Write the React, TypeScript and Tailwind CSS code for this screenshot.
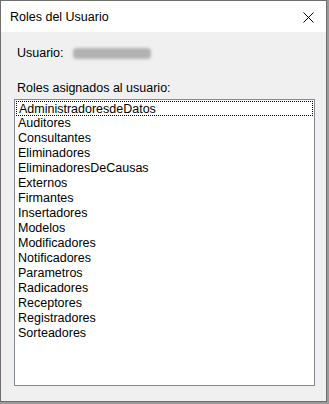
const roles = [
  "AdministradoresdeDatos",
  "Auditores",
  "Consultantes",
  "Eliminadores",
  "EliminadoresDeCausas",
  "Externos",
  "Firmantes",
  "Insertadores",
  "Modelos",
  "Modificadores",
  "Notificadores",
  "Parametros",
  "Radicadores",
  "Receptores",
  "Registradores",
  "Sorteadores",
];

export default function App() {
  return (
    <div
      className="w-[329px] h-[404px] bg-[#9a9a9a] text-[12.5px] text-black"
      style={{ fontFamily: '"Liberation Sans", Arial, sans-serif' }}
    >
      <div className="w-[327px] h-[402px] border border-[#6e6e6e] bg-[#f0f0f0] flex flex-col">
        {/* Title bar */}
        <div className="h-[31px] bg-white flex items-center justify-between pl-[9px] pr-[12px] pt-[1px]">
          <span>Roles del Usuario</span>
          <svg width="11" height="11" viewBox="0 0 11 11" className="text-black">
            <path d="M0.5 0.5L10.5 10.5M10.5 0.5L0.5 10.5" stroke="currentColor" strokeWidth="1" />
          </svg>
        </div>

        <div className="flex flex-col px-[13px] pt-[13px]">
          <div className="flex items-center gap-[9px] pl-[3px] h-[16px]">
            <span>Usuario:</span>
            <div className="w-[78px] h-[11px] bg-[#b2b2b2] blur-[1.5px] rounded-sm" />
          </div>

          <div className="pl-[3px] mt-[19px] h-[16px] leading-[16px]">Roles asignados al usuario:</div>

          <div className="mt-[3px] w-[301px] h-[287px] border border-[#828790] bg-white p-[1px]">
            {roles.map((r, i) => (
              <div
                key={r}
                className={
                  "h-[15px] leading-[14px] pl-[2px] " +
                  (i === 0 ? "border border-dotted border-black pl-[1px] leading-[12px]" : "")
                }
              >
                {r}
              </div>
            ))}
          </div>
        </div>
      </div>
    </div>
  );
}
